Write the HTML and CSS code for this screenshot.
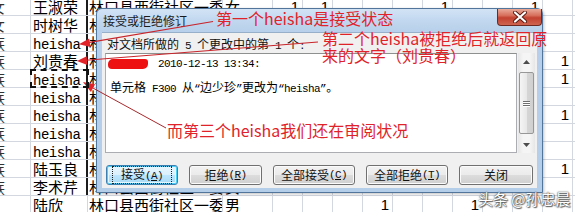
FILE: index.html
```html
<!DOCTYPE html>
<html lang="zh-CN">
<head>
<meta charset="utf-8">
<link rel="stylesheet" href="styles.css">
</head>
<body>
<div class="sheet">
  <div class="row"><div class="c z">女</div><div class="c a"></div><div class="c b dk">王淑荣</div><div class="c cc">林口县西街社区一委</div><div class="c d">女</div><div class="c n">1</div><div class="c n">1</div><div class="c n"></div><div class="c n"></div><div class="c n"></div><div class="c n">1</div><div class="c n"></div><div class="c n"></div><div class="c n">1</div><div class="c n"></div><div class="c f"></div></div>
  <div class="row"><div class="c z">女</div><div class="c a"></div><div class="c b dk">时树华</div><div class="c cc">林口县西街社区一委</div><div class="c d">女</div><div class="c n"></div><div class="c n"></div><div class="c n"></div><div class="c n"></div><div class="c n"></div><div class="c n"></div><div class="c n"></div><div class="c n"></div><div class="c n"></div><div class="c n"></div><div class="c f"></div></div>
  <div class="row"><div class="c z">族</div><div class="c a"></div><div class="c b dk"><span class="lat">heisha</span></div><div class="c cc">林口县西街社区一委</div><div class="c d">女</div><div class="c n"></div><div class="c n"></div><div class="c n"></div><div class="c n"></div><div class="c n"></div><div class="c n"></div><div class="c n"></div><div class="c n"></div><div class="c n"></div><div class="c n"></div><div class="c f"></div></div>
  <div class="row"><div class="c z">族</div><div class="c a"></div><div class="c b dk">刘贵春</div><div class="c cc">林口县西街社区一委</div><div class="c d">女</div><div class="c n"></div><div class="c n"></div><div class="c n"></div><div class="c n"></div><div class="c n"></div><div class="c n"></div><div class="c n"></div><div class="c n"></div><div class="c n"></div><div class="c n">1</div><div class="c f"></div></div>
  <div class="row"><div class="c z">族</div><div class="c a"></div><div class="c b dk sel"><span class="lat">heisha</span></div><div class="c cc">林口县西街社区一委</div><div class="c d">女</div><div class="c n"></div><div class="c n"></div><div class="c n"></div><div class="c n"></div><div class="c n"></div><div class="c n"></div><div class="c n"></div><div class="c n"></div><div class="c n"></div><div class="c n">1</div><div class="c f"></div></div>
  <div class="row"><div class="c z">族</div><div class="c a"></div><div class="c b dk"><span class="lat">heisha</span></div><div class="c cc">林口县西街社区一委</div><div class="c d">女</div><div class="c n"></div><div class="c n"></div><div class="c n"></div><div class="c n"></div><div class="c n"></div><div class="c n"></div><div class="c n"></div><div class="c n"></div><div class="c n"></div><div class="c n"></div><div class="c f"></div></div>
  <div class="row"><div class="c z">族</div><div class="c a"></div><div class="c b dk"><span class="lat">heisha</span></div><div class="c cc">林口县西街社区一委</div><div class="c d">女</div><div class="c n"></div><div class="c n"></div><div class="c n"></div><div class="c n"></div><div class="c n"></div><div class="c n"></div><div class="c n"></div><div class="c n"></div><div class="c n"></div><div class="c n">1</div><div class="c f"></div></div>
  <div class="row"><div class="c z">族</div><div class="c a"></div><div class="c b dk"><span class="lat">heisha</span></div><div class="c cc">林口县西街社区一委</div><div class="c d">女</div><div class="c n"></div><div class="c n"></div><div class="c n"></div><div class="c n"></div><div class="c n"></div><div class="c n"></div><div class="c n"></div><div class="c n"></div><div class="c n"></div><div class="c n"></div><div class="c f"></div></div>
  <div class="row"><div class="c z">族</div><div class="c a"></div><div class="c b dk"><span class="lat">heisha</span></div><div class="c cc">林口县西街社区一委</div><div class="c d">女</div><div class="c n"></div><div class="c n"></div><div class="c n"></div><div class="c n"></div><div class="c n"></div><div class="c n"></div><div class="c n"></div><div class="c n"></div><div class="c n"></div><div class="c n"></div><div class="c f"></div></div>
  <div class="row"><div class="c z">族</div><div class="c a"></div><div class="c b dk">陆玉良</div><div class="c cc">林口县西街社区一委</div><div class="c d">男</div><div class="c n"></div><div class="c n"></div><div class="c n"></div><div class="c n"></div><div class="c n"></div><div class="c n"></div><div class="c n"></div><div class="c n"></div><div class="c n"></div><div class="c n">1</div><div class="c f"></div></div>
  <div class="row"><div class="c z">族</div><div class="c a"></div><div class="c b dk">李术芹</div><div class="c cc">林口县西街社区一委</div><div class="c d">女</div><div class="c n"></div><div class="c n"></div><div class="c n"></div><div class="c n"></div><div class="c n"></div><div class="c n"></div><div class="c n"></div><div class="c n"></div><div class="c n"></div><div class="c n"></div><div class="c f"></div></div>
  <div class="row"><div class="c z"></div><div class="c a"></div><div class="c b">陆欣</div><div class="c cc">林口县西街社区一委</div><div class="c d">男</div><div class="c n"></div><div class="c n"></div><div class="c n"></div><div class="c n">1</div><div class="c n"></div><div class="c n"></div><div class="c n">1</div><div class="c n"></div><div class="c n"></div><div class="c n"></div><div class="c f"></div></div>
</div>

<div class="dlg">
  <div class="tbar">
    <div class="ttl">接受或拒绝修订</div>
    <div class="close">
      <svg width="18" height="12" viewBox="0 0 18 12"><path d="M4 1.5 L14 10.5 M14 1.5 L4 10.5" stroke="#5a1a12" stroke-width="4" stroke-linecap="round"/><path d="M4 1.5 L14 10.5 M14 1.5 L4 10.5" stroke="#ffffff" stroke-width="2.2" stroke-linecap="round"/></svg>
    </div>
  </div>
  <div class="client">
    <div class="lbl">对文档所做的<span class="m"> 5 </span>个更改中的第<span class="m"> 1 </span>个<span class="m">:</span></div>
    <div class="mid">
      <div class="tbox">
        <div class="l1"><span class="redact"></span><span class="m">2010-12-13 13:34:</span></div>
        <div class="l2">单元格<span class="m"> F300 </span>从<span class="m">“</span>边少珍<span class="m">”</span>更改为<span class="m">“heisha”</span>。</div>
      </div>
      <div class="sbar">
        <div class="sarr"><svg width="7" height="4" viewBox="0 0 7 4"><path d="M0 4 L3.5 0 L7 4 Z" fill="#4d4d4d"/></svg></div>
        <div class="strack"><div class="thumb"><div class="grip"></div><div class="grip"></div><div class="grip"></div></div></div>
        <div class="sarr"><svg width="7" height="4" viewBox="0 0 7 4"><path d="M0 0 L7 0 L3.5 4 Z" fill="#4d4d4d"/></svg></div>
      </div>
    </div>
    <div class="btns">
      <div class="btn def w72"><span class="focus">接受<span class="m">(<u>A</u>)</span></span></div>
      <div class="btn w73">拒绝<span class="m">(<u>R</u>)</span></div>
      <div class="btn w82">全部接受<span class="m">(<u>C</u>)</span></div>
      <div class="btn w82">全部拒绝<span class="m">(<u>T</u>)</span></div>
      <div class="btn w74">关闭</div>
    </div>
  </div>
</div>

<svg class="marks" width="575" height="212" viewBox="0 0 575 212">
  <line x1="213" y1="21.5" x2="88" y2="42.6" stroke="#c8242a" stroke-width="1.1"/>
  <polygon points="79,44.2 90.5,47 89.2,38.6" fill="#e0242a"/>
  <line x1="318" y1="42" x2="86" y2="60.3" stroke="#c8242a" stroke-width="1.1"/>
  <polygon points="77,61 87.3,65 86.7,56.2" fill="#e0242a"/>
  <line x1="166" y1="128" x2="92" y2="87.5" stroke="#a8282c" stroke-width="1"/>
  <polygon points="83,82 95,84.3 90.9,92" fill="#e0242a"/>
</svg>
<div class="note n1">第一个heisha是接受状态</div>
<div class="note n2">第二个heisha被拒绝后就返回原<br>来的文字（刘贵春）</div>
<div class="note n3">而第三个heisha我们还在审阅状况</div>
<div class="wm">头条 @孙忠晨</div>
</body>
</html>
```

FILE: styles.css
```css
* { box-sizing: border-box; margin: 0; padding: 0; }
html, body { width: 575px; height: 212px; overflow: hidden; background: #ffffff; }
body { position: relative; font-family: "Noto Sans CJK SC", sans-serif; color: #000; }

.sheet { margin-top: -2px; display: flex; flex-direction: column; }
.row { display: flex; flex: none; height: 18px; border-bottom: 1px solid #d3d8e0; }
.c {
  flex: none; height: 17px; border-right: 1px solid #d3d8e0;
  font-size: 15px; line-height: 17px; white-space: nowrap; overflow: hidden;
}
.z { width: 5px; border-right: none; display: flex; justify-content: flex-end; color: #333; }
.a { width: 26px; }
.b { width: 57px; padding-left: 2px; }
.b.dk { border-right: 2px solid #1c1c1c; }
.cc { width: 135px; padding-left: 1px; }
.d { width: 50px; padding-left: 2px; }
.n { width: 30px; text-align: right; padding-right: 3px; font-family: "Liberation Sans", sans-serif; font-size: 15px; }
.f { flex: 1; border-right: none; }
.lat { font-family: "Liberation Mono", monospace; font-size: 14px; letter-spacing: -0.5px; }
.sel { position: relative; z-index: 1; outline: 2px dashed #111; outline-offset: -1px; overflow: visible; }

/* dialog window */
.dlg {
  position: absolute; left: 96px; top: 8px; width: 447px; height: 185px;
  border: 1px solid #52759c; border-radius: 6px 6px 0 0;
  background: linear-gradient(180deg, #d3e3f5 0px, #c1d7ef 12px, #b7cfea 24px, #b4cde9 100%);
  padding: 0 5px 4px 5px;
  display: flex; flex-direction: column;
  box-shadow: 1px 1px 3px rgba(0,0,0,0.25);
}
.tbar { flex: none; height: 23px; display: flex; align-items: flex-start; }
.ttl { font-size: 12px; line-height: 23px; padding-left: 1px; color: #1b1b1b; }
.close {
  margin-left: auto; margin-right: -5px; width: 45px; height: 17px;
  border: 1px solid #6e2a22; border-top: none; border-radius: 0 0 4px 4px;
  background: linear-gradient(180deg, #e9aa98 0%, #d8705e 40%, #c2412f 55%, #cf6450 100%);
  display: flex; align-items: center; justify-content: center;
}
.client {
  flex: 1; background: #f0f0f0; border: 1px solid #98afc9; border-width: 1px 0 0 0;
  display: flex; flex-direction: column;
}
.m { font-family: "Liberation Mono", monospace; font-size: 11px; letter-spacing: -0.6px; }
.lbl { flex: none; height: 20px; line-height: 21px; padding-left: 5px; font-size: 12px; color: #111; }
.mid { flex: none; height: 100px; display: flex; gap: 1px; padding-left: 3px; }
.tbox {
  width: 412px; height: 100px; background: #fff;
  border: 1px solid #abadb3; border-top-color: #8e8f8f;
  padding: 3px 0 0 2px; font-size: 12px;
}
.l1 { height: 14px; line-height: 14px; display: flex; align-items: center; }
.redact {
  display: inline-block; width: 40px; height: 10px; margin-right: 10px;
  background: #ee1111; border-radius: 5px 3px 5px 4px;
}
.l2 { margin-top: 9px; height: 14px; line-height: 14px; padding-left: 2px; white-space: nowrap; }
.sbar {
  width: 17px; height: 100px; display: flex; flex-direction: column;
  background: linear-gradient(90deg, #e6e6e6, #f5f5f5 30%, #f5f5f5 70%, #e6e6e6);
}
.sarr { flex: none; height: 17px; display: flex; align-items: center; justify-content: center; }
.strack { flex: 1; padding: 2px 1px; display: flex; }
.thumb {
  flex: 1; border: 1px solid #979797; border-radius: 2px;
  background: linear-gradient(90deg, #f5f5f5, #e8e8e8 50%, #d6d6d6 51%, #d0d0d0);
  display: flex; flex-direction: column; align-items: center; justify-content: center; gap: 1px;
}
.grip { width: 7px; height: 1px; background: #6f6f6f; box-shadow: 0 1px 0 #fff; }

.btns { flex: none; margin-top: 12px; padding-left: 4px; display: flex; gap: 11px; }
.btn {
  height: 20px; border: 1px solid #707070; border-radius: 3px;
  background: linear-gradient(180deg, #f2f2f2 0%, #ebebeb 49%, #dddddd 50%, #cfcfcf 100%);
  box-shadow: inset 0 0 0 1px #fbfbfb;
  font-size: 12px; line-height: 18px; color: #111;
  display: flex; align-items: center; justify-content: center;
}
.btn u { text-decoration: underline; }
.w72 { width: 72px; } .w73 { width: 73px; } .w82 { width: 82px; } .w74 { width: 74px; }
.btn.def {
  border-color: #3c7fb1;
  box-shadow: inset 0 0 0 1px #48d0f8, inset 0 0 0 2px #e6f6fd;
  background: linear-gradient(180deg, #eaf6fd 0%, #d9f0fc 49%, #bee6fd 50%, #a7d9f5 100%);
}
.focus { padding: 0 8px; border: 1px dotted #222; line-height: 13px; }

/* annotation overlay */
.marks { position: absolute; left: 0; top: 0; }
.note {
  position: absolute; color: #e0232b; font-size: 16px; line-height: 17px;
  white-space: nowrap; font-family: "Noto Sans CJK SC", sans-serif;
}
.n1 { left: 216px; top: 10px; }
.n2 { left: 322px; top: 30px; }
.n3 { left: 167px; top: 122px; }
.wm {
  position: absolute; left: 478px; top: 190px; font-size: 15px; line-height: 18px;
  color: #ffffff; white-space: nowrap;
  text-shadow: 0 0 1px #444, 0 0 2px #555, 1px 1px 1px #666;
}
```
